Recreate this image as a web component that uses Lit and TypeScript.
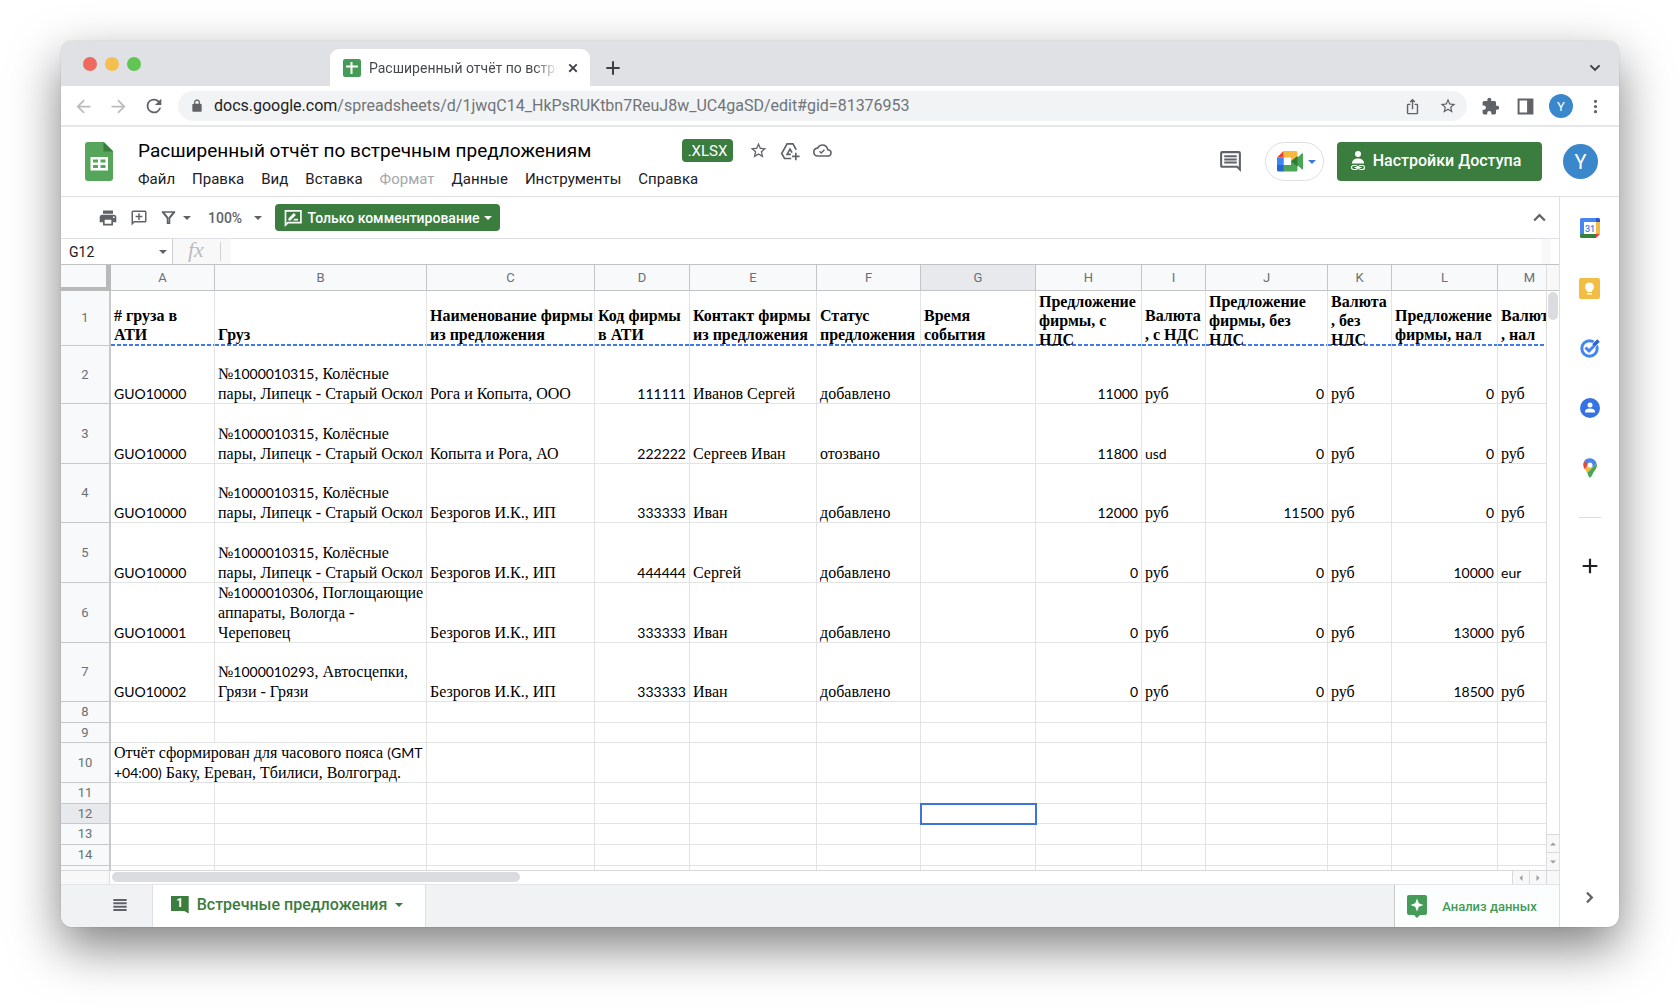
import { LitElement, html, css, nothing } from "lit";
import { customElement, state } from "lit/decorators.js";
import { classMap } from "lit/directives/class-map.js";
import { styleMap } from "lit/directives/style-map.js";

type Row = { h: number; cells?: Record<string, string> };

const COLUMNS: [string, number][] = [
  ["A", 104], ["B", 212], ["C", 168], ["D", 95], ["E", 127], ["F", 104], ["G", 115],
  ["H", 106], ["I", 64], ["J", 122], ["K", 64], ["L", 106], ["M", 64],
];
const NUMERIC = new Set(["D", "H", "J", "L"]);

const offer = (
  A: string, B: string, C: string, D: string, E: string, F: string,
  H: string, I: string, J: string, K: string, L: string, M: string,
) => ({ A, B, C, D, E, F, H, I, J, K, L, M });

const WHEELS = "№1000010315, Колёсные\nпары, Липецк - Старый Оскол";
const R = "руб";

const ROWS: Row[] = [
  {
    h: 55,
    cells: {
      A: "# груза в\nАТИ", B: "Груз", C: "Наименование фирмы\nиз предложения",
      D: "Код фирмы\nв АТИ", E: "Контакт фирмы\nиз предложения", F: "Статус\nпредложения",
      G: "Время\nсобытия", H: "Предложение\nфирмы, с\nНДС", I: "Валюта\n, с НДС",
      J: "Предложение\nфирмы, без\nНДС", K: "Валюта\n, без\nНДС",
      L: "Предложение\nфирмы, нал", M: "Валюта\n, нал",
    },
  },
  { h: 58, cells: offer("GUO10000", WHEELS, "Рога и Копыта, ООО", "111111", "Иванов Сергей", "добавлено", "11000", R, "0", R, "0", R) },
  { h: 60, cells: offer("GUO10000", WHEELS, "Копыта и Рога, АО", "222222", "Сергеев Иван", "отозвано", "11800", "usd", "0", R, "0", R) },
  { h: 59, cells: offer("GUO10000", WHEELS, "Безрогов И.К., ИП", "333333", "Иван", "добавлено", "12000", R, "11500", R, "0", R) },
  { h: 60, cells: offer("GUO10000", WHEELS, "Безрогов И.К., ИП", "444444", "Сергей", "добавлено", "0", R, "0", R, "10000", "eur") },
  { h: 60, cells: offer("GUO10001", "№1000010306, Поглощающие\nаппараты, Вологда -\nЧереповец", "Безрогов И.К., ИП", "333333", "Иван", "добавлено", "0", R, "0", R, "13000", R) },
  { h: 59, cells: offer("GUO10002", "№1000010293, Автосцепки,\nГрязи - Грязи", "Безрогов И.К., ИП", "333333", "Иван", "добавлено", "0", R, "0", R, "18500", R) },
  { h: 21 },
  { h: 20 },
  { h: 40, cells: { A: "Отчёт сформирован для часового пояса (GMT\n+04:00) Баку, Ереван, Тбилиси, Волгоград." } },
  { h: 21 }, { h: 20 }, { h: 21 }, { h: 21 }, { h: 21 },
];

const icon = (d: string, size = 20, box = "0 0 24 24") =>
  html`<svg width=${size} height=${size} viewBox=${box} fill="currentColor" aria-hidden="true"><path d=${d}></path></svg>`;

const P = {
  back: "M20 11H7.83l5.59-5.59L12 4l-8 8 8 8 1.41-1.41L7.83 13H20v-2z",
  forward: "M12 4l-1.41 1.41L16.17 11H4v2h12.17l-5.58 5.59L12 20l8-8z",
  reload: "M17.65 6.35A7.958 7.958 0 0 0 12 4a8 8 0 1 0 7.73 10h-2.08A6 6 0 1 1 12 6c1.66 0 3.14.69 4.22 1.78L13 11h7V4l-2.35 2.35z",
  lock: "M18 8h-1V6A5 5 0 0 0 7 6v2H6a2 2 0 0 0-2 2v10c0 1.100.9 2 2 2h12a2 2 0 0 0 2-2V10a2 2 0 0 0-2-2zM9 6a3 3 0 0 1 6 0v2H9V6z",
  share: "M16 5l-1.420 1.420-1.590-1.590V16h-1.980V4.830L9.420 6.420 8 5l4-4 4 4zm4 5v11c0 1.100-.9 2-2 2H6a2 2 0 0 1-2-2V10c0-1.110.89-2 2-2h3v2H6v11h12V10h-3V8h3a2 2 0 0 1 2 2z",
  star: "M22 9.240l-7.190-.62L12 2 9.190 8.630 2 9.240l5.460 4.730L5.820 21 12 17.270 18.180 21l-1.630-7.030L22 9.240zM12 15.400l-3.760 2.270 1-4.280-3.320-2.880 4.380-.38L12 6.100l1.710 4.040 4.380.38-3.320 2.880 1 4.280L12 15.400z",
  puzzle: "M20.500 11H19V7a2 2 0 0 0-2-2h-4V3.500a2.500 2.500 0 0 0-5 0V5H4a2 2 0 0 0-2 2v3.800h1.500a2.700 2.700 0 0 1 0 5.400H2V20c0 1.100.9 2 2 2h3.800v-1.500a2.700 2.700 0 0 1 5.400 0V22H17a2 2 0 0 0 2-2v-4h1.500a2.500 2.500 0 0 0 0-5z",
  panel: "M2 2h20v20H2V2zm2.500 2.500v15H14v-15H4.500z",
  kebab: "M12 7.500a2 2 0 1 0 0-4 2 2 0 0 0 0 4zm0 6.500a2 2 0 1 0 0-4 2 2 0 0 0 0 4zm0 6.500a2 2 0 1 0 0-4 2 2 0 0 0 0 4z",
  close: "M19.500 6.700L17.300 4.500 12 9.800 6.700 4.500 4.500 6.700 9.800 12l-5.300 5.300 2.200 2.200L12 14.200l5.300 5.300 2.200-2.200L14.200 12z",
  boldPlus: "M20 13.200h-6.800V20h-2.400v-6.800H4v-2.400h6.800V4h2.400v6.800H20z",
  down: "M6.700 7.500L12 12.800l5.300-5.300L19 9.200l-7 7-7-7z",
  up: "M12 7.500l-7 7 1.800 1.800L12 11.100l5.200 5.200 1.800-1.800z",
  right: "M10 5.500L8.200 7.300 12.900 12l-4.700 4.700L10 18.500l6.500-6.500z",
  caret: "M0 0h10L5 5z",
  print: "M19 8H5a3 3 0 0 0-3 3v6h4v4h12v-4h4v-6a3 3 0 0 0-3-3zm-3 11H8v-5h8v5zm3-7a1 1 0 1 1 0-2 1 1 0 0 1 0 2zM18 3H6v4h12V3z",
  addComment: "M22 4a2 2 0 0 0-2-2H4a2 2 0 0 0-2 2v18l4-4h14a2 2 0 0 0 2-2V4zM4 17.200V4h16v12H5.200L4 17.200zM11 5.500v3.500H7.500v2H11v3.500h2V11h3.500V9H13V5.500z",
  filter: "M2.500 3v1.800l7 8.700V21h5v-7.500l7-8.700V3h-19zm4.200 2.300h10.600l-5.100 6.400v7h-.4v-7z",
  comments: "M22 4a2 2 0 0 0-2-2H4a2 2 0 0 0-2 2v12c0 1.100.9 2 2 2h14l4 4V4zM4 16V4h16v13.200L18.800 16H4zM6 12h12v2H6zM6 9h12v2H6zM6 6h12v2H6z",
  cloud: "M19.350 10.040A7.490 7.490 0 0 0 12 4 7.500 7.500 0 0 0 5.350 8.040 6 6 0 0 0 6 20h13a5 5 0 0 0 .35-9.960zM19 18H6a4 4 0 0 1-.42-7.970l1.070-.11.5-.95A5.490 5.490 0 0 1 12 6c2.620 0 4.880 1.860 5.390 4.430l.3 1.500 1.530.11A3 3 0 0 1 19 18zm-8.600-4.200l-1.500-1.500-1.300 1.300 2.800 2.800 4.700-4.700-1.300-1.300z",
  list: "M2 3h20v3H2zM2 8h20v3H2zM2 13h20v3H2zM2 18h20v3H2z",
};

const caret = (w = 8) => icon(P.caret, w, "0 0 10 5");

const driveIcon = html`<svg width="20" height="20" viewBox="0 0 24 24" fill="none" stroke="currentColor" stroke-width="2" aria-hidden="true">
  <path d="M13.500 21H5.500L2 15 8.500 3.500h7L19.500 10.500M13 16H8.500L12 9.800l2.500 4.200M19 14v9M14.500 18.500h9"></path></svg>`;

const penIcon = html`<svg width="20" height="20" viewBox="0 0 24 24" fill="none" stroke="currentColor" stroke-width="2" aria-hidden="true">
  <path d="M3 20.500V3.500h18.500v14H6z"></path><path fill="currentColor" stroke="none" d="M6.500 12.500V15H9l6.500-6.500L13 6zM12 15h6v-2h-4z"></path></svg>`;

const sheetsLogo = html`<svg width="28" height="40" viewBox="0 0 28 40" aria-hidden="true">
  <path fill="#55a65a" d="M3 0h16l9 9v27a3 3 0 0 1-3 3H3a3 3 0 0 1-3-3V3a3 3 0 0 1 3-3z"></path>
  <path fill="#3a7d3f" d="M18.500 0L28 9.500h-9.500z"></path>
  <path fill="#fff" fill-rule="evenodd" d="M5.500 15h17.500v13.500H5.500zM8 17.500v3h5v-3zm7.500 0v3h5v-3zM8 23v3h5v-3zm7.500 0v3h5v-3z"></path></svg>`;

const favicon = html`<svg width="18" height="18" viewBox="0 0 18 18" aria-hidden="true">
  <rect width="18" height="18" rx="2" fill="#459b58"></rect><path fill="#fff" d="M7.500 3h2v3.500H15v2H9.500V15h-2V8.500H3v-2h4.500z"></path></svg>`;

const meetLogo = html`<svg width="26" height="21" viewBox="0 0 26 21" aria-hidden="true">
  <path fill="#4aa556" d="M6 6h14.500v13a1.500 1.500 0 0 1-1.500 1.500H6zM20.500 6.500l4.300-4c.6-.5 1.200-.2 1.200.6v14.500c0 .8-.6 1.100-1.200.6l-4.300-4z"></path>
  <path fill="#f5ba3d" d="M6.500 0H19a1.500 1.500 0 0 1 1.500 1.500v4l-6.500 5-7.500-4z"></path>
  <path fill="#fff" d="M6.500 6.500H14V14H6.500z"></path>
  <path fill="#e94235" d="M0 6.500L6.500 0v6.500z"></path><path fill="#3f84f3" d="M0 6.500h6.500V14H0z"></path>
  <path fill="#2266d6" d="M0 14h6.500v6.500h-5A1.500 1.500 0 0 1 0 19z"></path>
  <path fill="#2f7d32" d="M14 10.300l6.500-5.300v10.600z"></path></svg>`;

const shareIcon = html`<svg width="16" height="20" viewBox="0 0 16 20" fill="currentColor" aria-hidden="true">
  <circle cx="8" cy="3" r="3"></circle><path d="M2 12.500C2 9 4.500 7.500 8 7.500s6 1.500 6 5z"></path>
  <g fill="none" stroke="currentColor" stroke-width="1.200"><rect x="1.500" y="14.500" width="6" height="4" rx="2"></rect><rect x="8.500" y="14.500" width="6" height="4" rx="2"></rect><path d="M4.500 16.500h7"></path></g></svg>`;

const sideIcons = [
  ["Календарь", html`<svg width="20" height="20" viewBox="0 0 20 20" aria-hidden="true">
    <path fill="#4a84ee" d="M1.500 0H16v4H4v12H0V1.500A1.500 1.500 0 0 1 1.500 0z"></path><path fill="#2559c5" d="M16 0h2.500A1.500 1.500 0 0 1 20 1.500V4h-4z"></path>
    <path fill="#f4bb40" d="M16 4h4v12h-4z"></path><path fill="#38813c" d="M4 16h12v4H1.500A1.500 1.500 0 0 1 0 18.500V16z"></path>
    <path fill="#e94235" d="M16 16h4l-4 4z"></path><path fill="#fff" d="M4 4h12v12H4z"></path>
    <text x="10" y="13.500" text-anchor="middle" font-family="Roboto, sans-serif" font-size="9" font-weight="500" fill="#3f7ff0">31</text></svg>`],
  ["Keep", html`<svg width="21" height="21" viewBox="0 0 21 21" aria-hidden="true"><rect width="21" height="21" rx="2" fill="#f2bd42"></rect>
    <path fill="#fff" d="M10.500 4.500a4.500 4.500 0 0 0-2.500 8.200V14h5v-1.300a4.500 4.500 0 0 0-2.500-8.200zM8 15h5v1.500H8z"></path></svg>`],
  ["Задачи", html`<svg width="20" height="20" viewBox="0 0 20 20" fill="none" aria-hidden="true">
    <circle cx="9.500" cy="10.500" r="7.700" stroke="#4285f4" stroke-width="3"></circle><path stroke="#fff" stroke-width="5" d="M13 8l6-6"></path>
    <path stroke="#4285f4" stroke-width="3" d="M5.500 9.500l3.500 3.500 5-5"></path><path stroke="#2a62d0" stroke-width="3.500" d="M13.500 7.500l5-5"></path></svg>`],
  ["Контакты", html`<svg width="20" height="20" viewBox="0 0 20 20" aria-hidden="true"><circle cx="10" cy="10" r="10" fill="#3572e3"></circle>
    <circle cx="10" cy="7" r="2.500" fill="#fff"></circle><path fill="#fff" d="M5 14.500v-1c0-2 2-3 5-3s5 1 5 3v1z"></path></svg>`],
  ["Карты", html`<svg width="14" height="20" viewBox="0 0 14 20" aria-hidden="true">
    <path fill="#4aa556" d="M13.600 5.200c1 3-.4 5.500-2.200 7.800C9.200 16 8.500 19.500 7 19.500S5.500 17 4 14.500z"></path>
    <path fill="#f5ba3d" d="M1.800 11L5.500 6.500 10 9 4.200 15C3.500 13.500 2.600 12.500 1.800 11z"></path>
    <path fill="#e24a3b" d="M1.700 2.400l4 3.600-4 5.200C-.3 8-.3 5 1.700 2.400z"></path>
    <path fill="#4a84ee" d="M1.600 2.500C4.500-1 11.500-.8 13.600 5.300L9.500 9 5 6.500z"></path><circle cx="7" cy="7" r="2.500" fill="#fff"></circle></svg>`],
] as const;

/** One block per line; Latin letters and digits use the sheet's sans face, Cyrillic its serif face. */
const lines = (text: string) =>
  text.split("\n").map(
    (line) => html`<div>${line.split(/([A-Za-z0-9+:()]+)/).map((p, i) => (i % 2 ? html`<span class="latin">${p}</span>` : p))}</div>`,
  );

@customElement("sheet-grid")
export class SheetGrid extends LitElement {
  static styles = css`
    :host { display: block; min-width: 0; min-height: 0; overflow: hidden; background: #fff; }
    table { border-collapse: separate; border-spacing: 0; table-layout: fixed; width: 1501px; }
    th, td { padding: 0; box-sizing: border-box; }
    .corner { width: 50px; height: 26px; background: #f8f9fb; border-right: 5px solid #b9b9b9; border-bottom: 4px solid #b9b9b9; }
    .col, .row { background: #f8f9fb; color: #6b6f73; font: 400 13px/16px Roboto, sans-serif; text-align: center; }
    .col { height: 26px; border-right: 1px solid #c4c5c7; border-bottom: 1px solid #c4c5c7; }
    .row { border-right: 2px solid #c8c9cb; border-bottom: 1px solid #c8c9cb; }
    .on { background: #e8e9ed; }
    .cell { border-right: 1px solid #e2e3e3; border-bottom: 1px solid #e2e3e3; }
    .text { display: flex; align-items: safe end; box-sizing: border-box; height: 100%; padding: 0 3px; overflow: hidden; white-space: pre; color: #000; font: 400 16px/20px "Liberation Serif", serif; }
    .block { margin-bottom: -1px; }
    .num { justify-content: flex-end; }
    .head .text { font-weight: 700; line-height: 19px; }
    .head .block { margin-bottom: 2px; }
    .head .cell { border-bottom: 0; background: repeating-linear-gradient(90deg, #3f7aec 0 4px, #fff 4px 6px) left bottom / 100% 2px no-repeat; }
    .picked { outline: 2px solid #3d74dc; outline-offset: -1px; }
    .latin { font-family: Lato, sans-serif; font-size: 14px; }
  `;

  @state() private active = "G12";

  render() {
    return html`<table>
      <thead><tr><th class="corner" aria-label="Выделить всё"></th>
        ${COLUMNS.map(([c, w]) => html`<th scope="col" class=${classMap({ col: true, on: this.active.startsWith(c) })} style=${styleMap({ width: `${w}px` })}>${c}</th>`)}
      </tr></thead>
      <tbody>${ROWS.map((r, i) => this.row(r, i + 1))}</tbody>
    </table>`;
  }

  private row(r: Row, n: number) {
    const merged = n === 10;
    return html`<tr class=${n === 1 ? "head" : "line"} style=${styleMap({ height: `${r.h}px` })}>
      <th scope="row" class=${classMap({ row: true, on: this.active.slice(1) === String(n) })}>${n}</th>
      ${COLUMNS.filter(([c]) => !(merged && c === "B")).map(([c]) => {
        const t = r.cells?.[c];
        return html`<td colspan=${merged && c === "A" ? 2 : 1} class=${classMap({ cell: true, picked: this.active === c + n })} @click=${() => (this.active = c + n)}>
          ${t ? html`<div class=${classMap({ text: true, num: n > 1 && NUMERIC.has(c) })} style=${styleMap({ height: `${r.h - 1}px` })}><div class="block">${lines(t)}</div></div>` : nothing}
        </td>`;
      })}
    </tr>`;
  }
}

@customElement("app-root")
export class AppRoot extends LitElement {
  static styles = css`
    :host { display: flex; box-sizing: border-box; height: 100vh; padding: 41px 61px 80px; background: #fff; font-family: Roboto, sans-serif; color: #202124; }
    * { box-sizing: border-box; }
    button, input, select { font: inherit; color: inherit; border: 0; padding: 0; margin: 0; background: none; appearance: none; }
    button, a { display: inline-flex; align-items: center; justify-content: center; cursor: pointer; flex: none; }
    input { min-width: 0; }
    svg { display: block; flex: none; }
    .window { display: flex; flex-direction: column; flex: 1; min-width: 0; overflow: hidden; border-radius: 11px; background: #fff; box-shadow: 0 0 1px rgba(0,0,0,.4), 0 20px 50px rgba(0,0,0,.5); }
    .tabs { display: flex; align-items: flex-end; height: 45px; background: #dfe1e5; color: #3c4043; }
    .lights { display: flex; gap: 8px; align-self: center; padding-left: 22px; width: 269px; }
    .light { width: 14px; height: 14px; border-radius: 50%; background: #ec6a5e; }
    .light.mid { background: #f4bf4f; }
    .light.go { background: #61c554; }
    .tab { display: flex; align-items: center; gap: 8px; width: 260px; height: 37px; padding: 0 10px 0 13px; border-radius: 9px 9px 0 0; background: #fff; }
    .tab-name { flex: 1; overflow: hidden; white-space: nowrap; font-size: 14px; line-height: 20px; color: #45494d; mask-image: linear-gradient(90deg, #000 88%, transparent); }
    .new { width: 46px; height: 37px; }
    .more { margin-left: auto; width: 48px; height: 37px; }
    .nav { display: flex; align-items: center; height: 41px; padding: 1px 6px 0 5px; border-bottom: 2px solid #e6e7e8; color: #5f6368; }
    .nav button { width: 35px; height: 30px; }
    .nav .off { color: #babcbe; }
    .omni { display: flex; align-items: center; flex: 1; min-width: 0; height: 30px; margin: 0 6px 0 7px; padding: 0 2px 0 12px; border-radius: 15px; background: #f1f3f4; }
    .url { flex: 1; min-width: 0; padding-left: 10px; overflow: hidden; white-space: nowrap; font-size: 16px; line-height: 24px; color: #717478; outline: 0; }
    .host { color: #202124; }
    .avatar { border-radius: 50%; background: #3a87cc; color: #fff; }
    .nav .small { width: 24px; height: 24px; margin: 0 5px 0 6px; font-size: 13px; }
    .header { display: flex; align-items: center; height: 70px; padding: 0 21px 0 24px; border-bottom: 1px solid #dfe0e4; }
    .doc { display: flex; flex-direction: column; gap: 5px; flex: 1; min-width: 0; padding: 3px 0 0 25px; }
    .title-row { display: flex; align-items: center; color: #5f6368; }
    .title { width: 544px; height: 26px; font-size: 19px; line-height: 26px; color: #000; }
    .badge { height: 23px; width: 51px; margin-right: 15px; border-radius: 4px; background: #3a7d3f; color: #fff; font-size: 15px; line-height: 24px; text-align: center; }
    .title-row button { width: 20px; height: 22px; margin-right: 12px; }
    .menus { display: flex; gap: 17px; font-size: 15px; line-height: 20px; }
    .menus .off { color: #a4a7ab; }
    .talk { width: 46px; height: 38px; margin-right: 12px; color: #5f6368; }
    .meet { gap: 5px; width: 59px; height: 39px; padding-left: 3px; margin-right: 13px; border: 1px solid #dcdee1; border-radius: 20px; color: #3c78e0; }
    .access { gap: 7px; width: 205px; height: 39px; padding: 0 8px 2px 0; margin-right: 21px; border-radius: 4px; background: #3a7d3f; color: #fff; font-size: 16px; font-weight: 500; }
    .header .big { width: 35px; height: 35px; font-size: 20px; }
    .body { display: flex; flex: 1; min-height: 0; }
    .main { display: flex; flex-direction: column; flex: 1; min-width: 0; }
    .tools { display: flex; align-items: center; height: 42px; padding: 0 9px 0 37px; border-bottom: 1px solid #dfe0e4; color: #5f6368; font-size: 14px; font-weight: 500; }
    .tools .t { height: 28px; width: 20px; margin-right: 11px; }
    .tools .wide { width: 30px; gap: 6px; margin-right: 18px; }
    .zoom { display: flex; align-items: center; gap: 10px; width: 67px; }
    .zoom select { width: 36px; height: 20px; }
    .mode { gap: 5px; width: 225px; height: 27px; border-radius: 4px; background: #3a7d3f; color: #fff; }
    .fold { margin-left: auto; width: 22px; height: 28px; }
    .formula { display: flex; align-items: center; height: 26px; border-bottom: 1px solid #c0c1c3; }
    .name { width: 92px; height: 22px; padding-left: 8px; font-size: 14px; }
    .name-caret { width: 19px; height: 22px; color: #5f6368; }
    .fx { width: 59px; height: 25px; padding-left: 15px; border-left: 1px solid #cfd0d2; background: linear-gradient(#cfd0d2, #cfd0d2) 47px 3px / 1px 19px no-repeat, #f8f8f8; color: #bcbcbc; font: italic 400 22px/22px "Liberation Serif", serif; }
    .entry { flex: 1; height: 25px; }
    .strip { width: 10px; height: 25px; margin-right: 8px; background: #f8f8f8; }
    .sheet { display: grid; grid-template-columns: minmax(0, 1fr) 13px; grid-template-rows: minmax(0, 1fr) 14px; flex: 1; min-height: 0; }
    .vbar { display: flex; flex-direction: column; border-left: 1px solid #dcdddf; color: #9b9c9e; }
    .vtop { height: 26px; background: #f8f8f8; border-bottom: 1px solid #c4c5c7; }
    .vthumb { width: 10px; height: 28px; margin: 1px; border-radius: 5px; background: #dadce0; }
    .step { width: 100%; height: 18px; border-top: 1px solid #d8d9db; background: #f8f8f8; }
    .step.first { margin-top: auto; }
    .hbar { display: flex; border-top: 1px solid #d8d9db; color: #9b9c9e; }
    .hleft { width: 49px; border-right: 1px solid #dcdddf; background: #f8f8f8; }
    .hthumb { width: 408px; height: 10px; margin: 1px 2px; border-radius: 5px; background: #dadce0; }
    .hstep { width: 17px; height: 13px; border-left: 1px solid #d8d9db; background: #f8f8f8; }
    .hstep.first { margin-left: auto; }
    .end { border-top: 1px solid #d8d9db; border-left: 1px solid #d8d9db; background: #f8f8f8; }
    .foot { display: flex; height: 43px; background: #f0f2f4; border-top: 1px solid #e3e5e8; color: #3a7d3f; }
    .all { width: 91px; padding: 0 0 3px 27px; color: #5f6368; }
    .current { gap: 8px; width: 274px; padding: 0 4px 3px 0; background: #fff; border: solid #dcdfe3; border-width: 0 1px; font-size: 16px; font-weight: 500; }
    .count { width: 18px; height: 18px; background: #3a7d3f; color: #fff; font-size: 12px; font-weight: 700; line-height: 15px; clip-path: polygon(0 0, 100% 0, 100% 100%, 75% 86%, 0 86%); }
    .analyse { gap: 15px; width: 165px; margin-left: auto; padding-right: 10px; border-left: 1px solid #c6cbc8; background: #fbfefd; color: #459b58; font-size: 13px; font-weight: 500; }
    .side { display: flex; flex-direction: column; align-items: center; width: 60px; padding-top: 1px; border-left: 1px solid #dfe0e4; }
    .side button { width: 40px; height: 60px; }
    .rule { width: 22px; height: 1px; margin: 19px 0 18px; background: #dadce0; }
    .hide { margin-top: auto; color: #5f6368; }
  `;

  render() {
    return html`<div class="window">
      <div class="tabs">
        <div class="lights"><span class="light"></span><span class="light mid"></span><span class="light go"></span></div>
        <div class="tab">${favicon}<span class="tab-name">Расширенный отчёт по встречным</span>
          <button aria-label="Закрыть вкладку">${icon(P.close, 14)}</button></div>
        <button class="new" aria-label="Новая вкладка">${icon(P.boldPlus, 20)}</button>
        <button class="more" aria-label="Вкладки">${icon(P.down, 18)}</button>
      </div>
      <div class="nav">
        <button class="off" aria-label="Назад">${icon(P.back, 21)}</button>
        <button class="off" aria-label="Вперёд">${icon(P.forward, 21)}</button>
        <button aria-label="Обновить">${icon(P.reload, 22)}</button>
        <div class="omni">${icon(P.lock, 14)}
          <div class="url" role="textbox" contenteditable="true" aria-label="Адрес"><span class="host">docs.google.com</span>/spreadsheets/d/1jwqC14_HkPsRUKtbn7ReuJ8w_UC4gaSD/edit#gid=81376953</div>
          <button aria-label="Поделиться">${icon(P.share, 17)}</button>
          <button aria-label="В закладки">${icon(P.star, 18)}</button>
        </div>
        <button aria-label="Расширения">${icon(P.puzzle, 19)}</button>
        <button aria-label="Боковая панель">${icon(P.panel, 19)}</button>
        <button class="avatar small" aria-label="Профиль">Y</button>
        <button aria-label="Меню браузера">${icon(P.kebab, 19)}</button>
      </div>
      <div class="header">
        <a href="#" aria-label="Таблицы">${sheetsLogo}</a>
        <div class="doc">
          <div class="title-row">
            <input class="title" aria-label="Название" .value=${"Расширенный отчёт по встречным предложениям"} />
            <span class="badge">.XLSX</span>
            <button aria-label="Пометить">${icon(P.star, 19)}</button>
            <button aria-label="Добавить на Диск">${driveIcon}</button>
            <button aria-label="Сохранено">${icon(P.cloud, 19)}</button>
          </div>
          <div class="menus">
            ${["Файл", "Правка", "Вид", "Вставка", "Формат", "Данные", "Инструменты", "Справка"].map(
              (m) => html`<button class=${classMap({ off: m === "Формат" })} ?disabled=${m === "Формат"}>${m}</button>`,
            )}
          </div>
        </div>
        <button class="talk" aria-label="Комментарии">${icon(P.comments, 25)}</button>
        <button class="meet" aria-label="Meet">${meetLogo}${caret()}</button>
        <button class="access">${shareIcon}<span>Настройки Доступа</span></button>
        <button class="avatar big" aria-label="Аккаунт">Y</button>
      </div>
      <div class="body">
        <div class="main">
          <div class="tools">
            <button class="t" aria-label="Печать">${icon(P.print, 20)}</button>
            <button class="t" aria-label="Комментарий">${icon(P.addComment, 18)}</button>
            <button class="t wide" aria-label="Фильтр">${icon(P.filter, 17)}${caret()}</button>
            <label class="zoom"><select aria-label="Масштаб"><option>100%</option></select>${caret()}</label>
            <button class="mode">${penIcon}<span>Только комментирование</span>${caret()}</button>
            <button class="fold" aria-label="Свернуть">${icon(P.up, 21)}</button>
          </div>
          <div class="formula">
            <input class="name" aria-label="Диапазон" .value=${"G12"} />
            <button class="name-caret" aria-label="Диапазоны">${caret()}</button>
            <label class="fx" for="entry">fx</label>
            <input class="entry" id="entry" />
            <span class="strip"></span>
          </div>
          <div class="sheet">
            <sheet-grid></sheet-grid>
            <div class="vbar"><div class="vtop"></div><div class="vthumb"></div>
              <button class="step first" aria-label="Вверх">${icon("M0 5h10L5 0z", 6, "0 0 10 5")}</button>
              <button class="step" aria-label="Вниз">${caret(6)}</button></div>
            <div class="hbar"><div class="hleft"></div><div class="hthumb"></div>
              <button class="hstep first" aria-label="Влево">${icon("M5 0v10L0 5z", 6, "0 0 5 10")}</button>
              <button class="hstep" aria-label="Вправо">${icon("M0 0v10l5-5z", 6, "0 0 5 10")}</button></div>
            <div class="end"></div>
          </div>
          <div class="foot">
            <button class="all" aria-label="Все листы">${icon(P.list, 16)}</button>
            <button class="current"><span class="count">1</span><span>Встречные предложения</span>${caret()}</button>
            <button class="analyse"><svg width="20" height="23" viewBox="0 0 20 23" aria-hidden="true">
              <path fill="#459b58" d="M2 0h16a2 2 0 0 1 2 2v16a2 2 0 0 1-2 2h-5l-3 3-3-3H2a2 2 0 0 1-2-2V2a2 2 0 0 1 2-2z"></path>
              <path fill="#fff" d="M10 3.500l1.800 4.700 4.700 1.800-4.700 1.800L10 16.500l-1.800-4.700L3.500 10l4.700-1.800z"></path></svg>
              <span>Анализ данных</span></button>
          </div>
        </div>
        <div class="side">
          ${sideIcons.map(([l, i]) => html`<button aria-label=${l}>${i}</button>`)}
          <div class="rule"></div>
          <button aria-label="Дополнения">${icon(P.boldPlus, 22)}</button>
          <button class="hide" aria-label="Скрыть панель">${icon(P.right, 21)}</button>
        </div>
      </div>
    </div>`;
  }
}
